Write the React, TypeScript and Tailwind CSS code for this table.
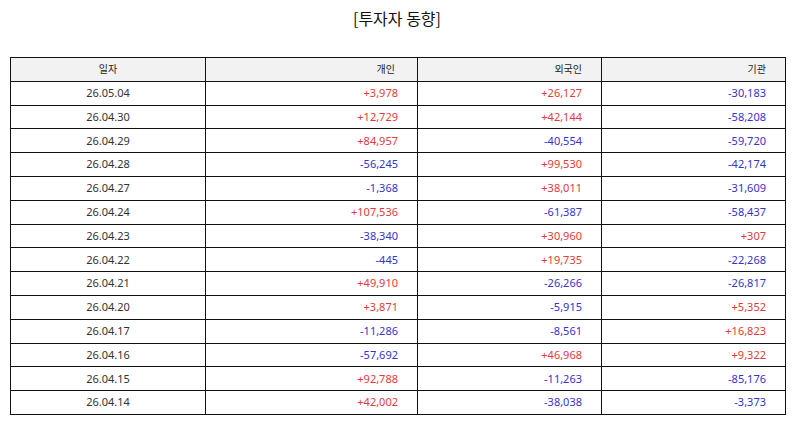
const rows: [string, string, string, string][] = [
  ["26.05.04", "+3,978", "+26,127", "-30,183"],
  ["26.04.30", "+12,729", "+42,144", "-58,208"],
  ["26.04.29", "+84,957", "-40,554", "-59,720"],
  ["26.04.28", "-56,245", "+99,530", "-42,174"],
  ["26.04.27", "-1,368", "+38,011", "-31,609"],
  ["26.04.24", "+107,536", "-61,387", "-58,437"],
  ["26.04.23", "-38,340", "+30,960", "+307"],
  ["26.04.22", "-445", "+19,735", "-22,268"],
  ["26.04.21", "+49,910", "-26,266", "-26,817"],
  ["26.04.20", "+3,871", "-5,915", "+5,352"],
  ["26.04.17", "-11,286", "-8,561", "+16,823"],
  ["26.04.16", "-57,692", "+46,968", "+9,322"],
  ["26.04.15", "+92,788", "-11,263", "-85,176"],
  ["26.04.14", "+42,002", "-38,038", "-3,373"],
];

function Num({ v }: { v: string }) {
  const up = v.startsWith("+");
  return (
    <td
      className={
        "border border-[#111] pr-[19px] text-right " +
        (up ? "text-[#e23a3a]" : "text-[#3434c8]")
      }
    >
      {v}
    </td>
  );
}

export default function App() {
  return (
    <div className="w-[794px] h-[425px] bg-white px-[10px] pt-[7px] font-['Noto_Sans','Noto_Sans_CJK_KR',sans-serif]">
      <h1 className="text-center text-[16px] leading-[22px] text-[#111] font-['Noto_Sans_CJK_KR',sans-serif]">
        [투자자 동향]
      </h1>
      <table className="mt-[28px] w-[775px] border-collapse table-fixed text-[11px] text-[#333]">
        <colgroup>
          <col className="w-[195px]" />
          <col className="w-[212px]" />
          <col className="w-[184px]" />
          <col className="w-[184px]" />
        </colgroup>
        <thead>
          <tr className="h-[23.8px] bg-[#f2f2f2] text-[#222] text-[10px]">
            <th className="border border-[#111] font-normal text-center">일자</th>
            <th className="border border-[#111] font-normal text-right pr-[22px]">개인</th>
            <th className="border border-[#111] font-normal text-right pr-[19px]">외국인</th>
            <th className="border border-[#111] font-normal text-right pr-[19px]">기관</th>
          </tr>
        </thead>
        <tbody>
          {rows.map((r) => (
            <tr key={r[0]} className="h-[23.8px]">
              <td className="border border-[#111] text-center">{r[0]}</td>
              <Num v={r[1]} />
              <Num v={r[2]} />
              <Num v={r[3]} />
            </tr>
          ))}
        </tbody>
      </table>
    </div>
  );
}
